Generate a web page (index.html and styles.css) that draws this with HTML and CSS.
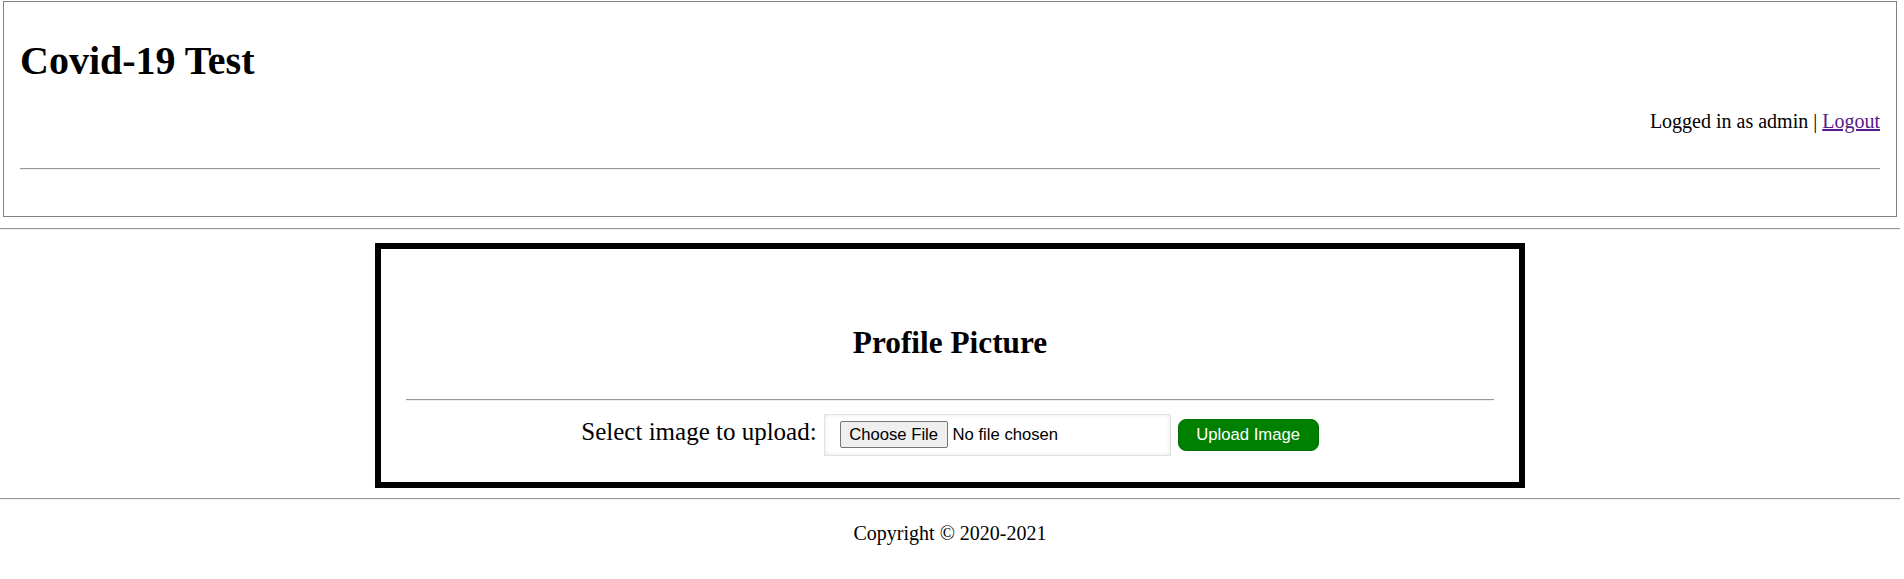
FILE: index.html
```html
<!DOCTYPE html>
<html lang="en">
<head>
<meta charset="utf-8">
<title>Covid-19 Test - Profile Picture</title>
<link rel="stylesheet" href="styles.css">
</head>
<body>
<header class="site-header">
  <h1 class="site-title">Covid-19 Test</h1>
  <p class="user-bar">Logged in as admin | <a class="logout" href="#">Logout</a></p>
  <hr class="header-rule">
</header>
<hr class="page-rule page-rule-top">
<main class="card">
  <h2 class="card-title">Profile Picture</h2>
  <hr class="card-rule">
  <form class="upload-row" action="#" onsubmit="return false">
    <label class="upload-label" for="fileToUpload">Select image to upload:</label>
    <input class="file-input" type="file" id="fileToUpload" name="fileToUpload">
    <button class="upload-btn" type="submit">Upload Image</button>
  </form>
</main>
<hr class="page-rule page-rule-bottom">
<footer class="site-footer">
  <p class="copyright">Copyright © 2020-2021</p>
</footer>
</body>
</html>
```
FILE: styles.css
```css
html, body {
  background: #ffffff;
}

body {
  margin: 0;
  width: 1900px;
  font-family: "Liberation Serif", "Times New Roman", serif;
  font-size: 20px;
  color: #000000;
}

.site-header {
  margin: 1px 3px 0;
  padding: 0 16px;
  border: 1px solid #808080;
  display: flow-root;
}

.site-title {
  margin: 36px 0 27px;
  font-size: 40px;
  line-height: 45px;
  font-weight: bold;
}

.user-bar {
  margin: 0;
  text-align: right;
  line-height: 23px;
}

.logout {
  color: #551a8b;
  text-decoration: underline;
}

.header-rule,
.page-rule,
.card-rule {
  height: 0;
  border: 0;
  border-top: 1px solid #9a9a9a;
  border-bottom: 1px solid #eeeeee;
}

.header-rule {
  margin: 35px 0 46px;
}

.page-rule-top {
  margin: 11px 0 13px;
}

.page-rule-bottom {
  margin: 10px 0 0;
}

.card {
  box-sizing: border-box;
  width: 1150px;
  margin: 0 auto;
  padding: 76px 25px 26px;
  border: 6px solid #000000;
}

.card-title {
  margin: 0;
  text-align: center;
  font-size: 31.3px;
  line-height: 35px;
  font-weight: bold;
}

.card-rule {
  margin: 39px 0 13px;
}

.upload-row {
  display: flex;
  justify-content: center;
  align-items: baseline;
  margin: 0;
}

.upload-label {
  font-size: 25px;
  line-height: 28px;
  margin-right: 7px;
}

.file-input {
  box-sizing: border-box;
  width: 347px;
  height: 42px;
  margin: 0;
  padding: 6px 15px;
  border: 1px solid #e2e2e2;
  background: #ffffff;
  box-shadow: inset 0 0 4px rgba(0, 0, 0, 0.10);
  font-family: "Liberation Sans", Arial, sans-serif;
  font-size: 16.67px;
  color: #000000;
}

.file-input::file-selector-button {
  box-sizing: border-box;
  height: 27px;
  margin: 0 5px 0 0;
  padding: 0 8.5px;
  border: 1px solid #767676;
  border-radius: 2px;
  background: #efefef;
  color: #000000;
  font-family: "Liberation Sans", Arial, sans-serif;
  font-size: 16.67px;
}

.upload-btn {
  box-sizing: border-box;
  width: 141px;
  height: 32px;
  margin: 0 0 0 7px;
  padding: 0;
  border: 1px solid #007000;
  border-radius: 8px;
  background: #008000;
  color: #ffffff;
  font-family: "Liberation Sans", Arial, sans-serif;
  font-size: 16.67px;
}

.site-footer {
  display: flow-root;
}

.copyright {
  margin: 22px 0 0;
  text-align: center;
  line-height: 23px;
}
```
